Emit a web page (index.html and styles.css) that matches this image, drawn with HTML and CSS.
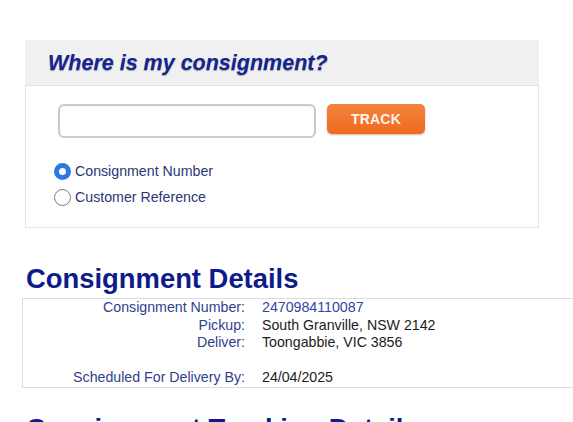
FILE: index.html
```html
<!DOCTYPE html>
<html lang="en">
<head>
<meta charset="utf-8">
<title>Where is my consignment?</title>
<link rel="stylesheet" href="styles.css">
</head>
<body>
<div class="page">
  <section class="tracker">
    <div class="tracker-head">
      <h2 class="tracker-title">Where is my consignment?</h2>
    </div>
    <div class="tracker-body">
      <div class="track-form">
        <div class="track-input"></div>
        <div class="track-btn">TRACK</div>
      </div>
      <div class="radios">
        <div class="radio-row"><span class="radio radio-on"></span><span class="radio-label">Consignment Number</span></div>
        <div class="radio-row"><span class="radio"></span><span class="radio-label">Customer Reference</span></div>
      </div>
    </div>
  </section>

  <h1 class="section-title">Consignment Details</h1>
  <div class="details">
    <div class="d-label">Consignment Number:</div><div class="d-value d-link">2470984110087</div>
    <div class="d-label">Pickup:</div><div class="d-value">South Granville, NSW 2142</div>
    <div class="d-label">Deliver:</div><div class="d-value">Toongabbie, VIC 3856</div>
    <div class="d-label">&nbsp;</div><div class="d-value">&nbsp;</div>
    <div class="d-label">Scheduled For Delivery By:</div><div class="d-value">24/04/2025</div>
  </div>

  <h1 class="section-title section-title-next">Consignment Tracking Details</h1>
</div>
</body>
</html>
```

FILE: styles.css
```css
html, body {
  margin: 0;
  padding: 0;
  overflow: hidden;
  background: #ffffff;
}
body {
  font-family: "Liberation Sans", Arial, sans-serif;
  width: 573px;
  height: 422px;
}
.page {
  padding-top: 40px;
}
.tracker {
  margin-left: 25px;
  width: 514px;
}
.tracker-head {
  background: #f0f0f0;
  height: 45px;
  padding-left: 23px;
}
.tracker-title {
  margin: 0;
  font-size: 21.5px;
  line-height: 46px;
  font-weight: bold;
  font-style: italic;
  color: #152590;
  text-shadow: 0 1px 1px rgba(0, 0, 40, 0.35);
}
.tracker-body {
  border: 1px solid #e4e4e4;
  box-sizing: border-box;
  height: 143px;
}
.track-form {
  display: flex;
  align-items: flex-start;
  gap: 11px;
  padding-left: 32px;
  padding-top: 18px;
}
.track-input {
  width: 258px;
  height: 34px;
  box-sizing: border-box;
  border: 2px solid #cbcbcb;
  border-radius: 6px;
  background: #fff;
  box-shadow: inset 0 1px 2px rgba(0, 0, 0, 0.06);
}
.track-btn {
  width: 98px;
  height: 30px;
  border-radius: 5px;
  background: linear-gradient(#f6833c, #ee6a1f);
  box-shadow: 0 1px 2px rgba(120, 50, 0, 0.35);
  color: #fff4ea;
  font-weight: bold;
  font-size: 14px;
  line-height: 30px;
  text-align: center;
  letter-spacing: 0.2px;
}
.radios {
  padding-left: 28px;
  padding-top: 24px;
  display: flex;
  flex-direction: column;
  gap: 8px;
}
.radio-row {
  display: flex;
  align-items: center;
  height: 18px;
  gap: 4px;
}
.radio {
  width: 17px;
  height: 17px;
  box-sizing: border-box;
  border-radius: 50%;
  border: 1.5px solid #7a7a7a;
  background: #fff;
}
.radio-on {
  border: 5px solid #2c78e4;
}
.radio-label {
  font-size: 14.2px;
  color: #2c3676;
}
.section-title {
  margin: 0;
  margin-left: 26px;
  margin-top: 35px;
  font-size: 27.4px;
  line-height: 32px;
  font-weight: bold;
  color: #0d1c8a;
  white-space: nowrap;
}
.section-title-next {
  margin-top: 25px;
}
.details {
  margin-top: 3px;
  margin-left: 22px;
  width: 600px;
  border: 1px solid #dcdcdc;
  display: grid;
  grid-template-columns: 222px 1fr;
  font-size: 14.2px;
  line-height: 17.6px;
}
.d-label {
  text-align: right;
  color: #2f3f8c;
}
.d-value {
  padding-left: 17px;
  color: #1c1c1c;
}
.d-link {
  color: #2f46a6;
}
```
